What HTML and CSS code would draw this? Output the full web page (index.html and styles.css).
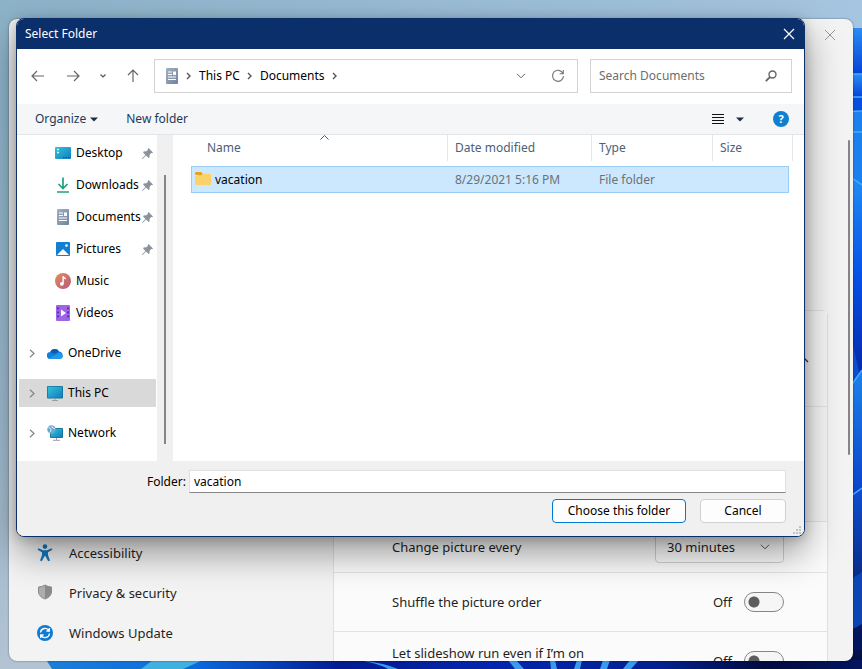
FILE: index.html
```html
<!DOCTYPE html>
<html lang="en">
<head>
<meta charset="utf-8">
<title>Select Folder</title>
<link rel="stylesheet" href="styles.css">
</head>
<body>
<svg class="wallpaper" viewBox="0 0 862 669" preserveAspectRatio="none" aria-hidden="true">
  <defs>
    <linearGradient id="sky" x1="0" y1="0" x2="1" y2="0"><stop offset="0" stop-color="#8db3c9"/><stop offset="1" stop-color="#a6c5e0"/></linearGradient>
    <linearGradient id="side" x1="0" y1="0" x2="0" y2="1"><stop offset="0" stop-color="#8fb0c8" stop-opacity="0"/><stop offset="1" stop-color="#b3c3d3"/></linearGradient>
    <linearGradient id="p1" x1="0" y1="0" x2="0" y2="1"><stop offset="0" stop-color="#2a8df5"/><stop offset="1" stop-color="#0344d6"/></linearGradient>
    <linearGradient id="p2" x1="0" y1="0" x2="0" y2="1"><stop offset="0" stop-color="#2390f4"/><stop offset=".5" stop-color="#0450e8"/><stop offset="1" stop-color="#0425a0"/></linearGradient>
    <linearGradient id="p3" x1="0" y1="0" x2="0" y2="1"><stop offset="0" stop-color="#1c83ea"/><stop offset="1" stop-color="#0534c4"/></linearGradient>
    <linearGradient id="p4" x1="0" y1="0" x2="0" y2="1"><stop offset="0" stop-color="#0e4fd2"/><stop offset="1" stop-color="#020a3c"/></linearGradient>
    <linearGradient id="floor" x1="0" y1="0" x2="1" y2="0"><stop offset="0" stop-color="#1b7fd8"/><stop offset=".18" stop-color="#0a6ade"/><stop offset=".36" stop-color="#031a8e"/><stop offset=".55" stop-color="#0426ad"/><stop offset=".75" stop-color="#03208e"/><stop offset=".88" stop-color="#020b40"/><stop offset="1" stop-color="#04155f"/></linearGradient>
  </defs>
  <rect width="862" height="669" fill="url(#sky)"/>
  <rect width="60" height="669" fill="url(#side)"/>
  <path d="M840 28h22v46h-22z" fill="url(#p1)"/>
  <path d="M840 74h22v23h-22z" fill="url(#p1)"/>
  <path d="M840 97h22v15h-22z" fill="#0750df"/>
  <path d="M840 112h22v80h-22z" fill="#1c80ef"/>
  <path d="M840 170l22 15v200h-22z" fill="url(#p2)"/>
  <path d="M840 320l13 25 9 40-22 20z" fill="#0a4fd0"/>
  <path d="M862 370l-22 32v120h22z" fill="url(#p3)"/>
  <path d="M862 488l-22 14v167h22z" fill="url(#p4)"/>
  <path d="M862 572l-22 14v50l22-12z" fill="#0c46b4"/>
  <path d="M840 74h22M840 97h22M840 112l22-1M840 132h22M846 174l16 11M862 370l-14 20M862 488l-14 10" fill="none" stroke="#46adff" stroke-width="1.5"/>
  <path d="M40 650h822v-20l-8 10v13L52 669z" fill="url(#floor)"/>
  <path d="M50 660h812v9H53z" fill="url(#floor)"/>
  <path d="M153 660h50l-20 9h-42z" fill="#3fb0e0"/>
  <path d="M360 660q24 3 38 9h-10q-8-5-28-9zM508 660h8l8 9h-9zM550 660h5l2 9h-6zM577 660h5l-2 9h-6zM603 660h7l-3 9h-7zM630 660h9l-8 9h-8z" fill="#389bec"/>
</svg>

<main class="settings">
  <nav class="settings-nav" aria-label="Settings">
    <a href="#accessibility"><svg width="16" height="18" viewBox="0 0 16 18"><circle cx="8" cy="2.6" r="2.3" fill="#1779c2"/><path d="M1.500 4.200L6 6.300h4l4.500-2.100.9 1.500L11 8.200V11l2 5.600-1.800.7L8.300 12h-.6l-2.900 5.300-1.800-.7L5 11V8.200L.6 5.700z" fill="#1779c2"/></svg>Accessibility</a>
    <a href="#privacy"><svg width="16" height="18" viewBox="0 0 16 18"><path d="M8 1q3 2 6.500 2v5Q14 13 8 15z" fill="#8b8b8b"/><path d="M8 1Q5 3 1.500 3v5Q2 13 8 15z" fill="#adadad"/><path d="M8 1q3 2 6.500 2v5Q14 13 8 15 2 13 1.500 8V3Q5 3 8 1z" fill="none" stroke="#8c8c8c"/></svg>Privacy &amp; security</a>
    <a href="#update"><svg width="16" height="16" viewBox="0 0 16 16"><circle cx="8" cy="8" r="8" fill="#0f7bd3"/><path d="M3.500 7.500A4.600 4.600 0 0 1 12 5.600M12.300 3v3H9.400M12.500 8.500A4.600 4.600 0 0 1 4 10.400M3.700 13v-3h2.900" fill="none" stroke="#fff" stroke-width="1.300"/></svg>Windows Update</a>
  </nav>
  <section class="settings-page">
    <button class="window-close" aria-label="Close settings"><svg width="12" height="12" viewBox="0 0 12 12"><path d="M1 1l10 10M11 1L1 11" stroke="#999" fill="none"/></svg></button>
    <div class="card">
      <div class="row row-head"><button class="expander" aria-label="Collapse"><svg width="13" height="8" viewBox="0 0 13 8"><path d="M1 7l5.500-5.500L12 7" fill="none" stroke="#333" stroke-width="1.300"/></svg></button></div>
      <div class="row row-gallery"></div>
      <div class="row row-short"><label for="interval">Change picture every</label>
        <span class="dropdown"><select id="interval"><option>30 minutes</option></select><svg width="10" height="6" viewBox="0 0 10 6"><path d="M1 .8l4 4 4-4" fill="none" stroke="#555"/></svg></span></div>
      <div class="row"><label for="shuffle">Shuffle the picture order</label><span class="switch"><span>Off</span><input type="checkbox" id="shuffle"></span></div>
      <div class="row row-top"><label for="battery">Let slideshow run even if I’m on</label><span class="switch"><span>Off</span><input type="checkbox" id="battery"></span></div>
    </div>
  </section>
  <div class="page-scroll"></div>
</main>

<div class="dialog" role="dialog" aria-labelledby="dialog-title">
  <header class="titlebar">
    <h1 id="dialog-title">Select Folder</h1>
    <button aria-label="Close"><svg width="12" height="12" viewBox="0 0 12 12"><path d="M1 1l10 10M11 1L1 11" stroke="#fff" stroke-width="1.200" fill="none"/></svg></button>
  </header>

  <div class="location">
    <div class="history">
      <button aria-label="Back"><svg width="14" height="12" viewBox="0 0 14 12"><path d="M13 6H1M6 1L1 6l5 5" fill="none" stroke="#666" stroke-width="1.200"/></svg></button>
      <button aria-label="Forward"><svg width="14" height="12" viewBox="0 0 14 12"><path d="M1 6h12M8 1l5 5-5 5" fill="none" stroke="#666" stroke-width="1.200"/></svg></button>
      <button class="recent" aria-label="Recent locations"><svg width="8" height="6" viewBox="0 0 8 6"><path d="M1.500 1.500L4 4l2.500-2.500" fill="none" stroke="#555" stroke-width="1.200"/></svg></button>
      <button aria-label="Up"><svg width="12" height="14" viewBox="0 0 12 14"><path d="M6 13V1M1 6l5-5 5 5" fill="none" stroke="#666" stroke-width="1.200"/></svg></button>
    </div>
    <div class="address">
      <svg width="12" height="16" viewBox="0 0 12 16"><use href="#doc"/></svg>
      <svg class="crumb-arrow" width="5" height="8" viewBox="0 0 5 8"><path d="M1 1l3 3-3 3" fill="none" stroke="#555" stroke-width="1.400"/></svg>
      <a href="#pc">This PC</a>
      <svg class="crumb-arrow" width="5" height="8" viewBox="0 0 5 8"><path d="M1 1l3 3-3 3" fill="none" stroke="#555" stroke-width="1.400"/></svg>
      <a href="#documents">Documents</a>
      <svg class="crumb-arrow" width="5" height="8" viewBox="0 0 5 8"><path d="M1 1l3 3-3 3" fill="none" stroke="#555" stroke-width="1.400"/></svg>
      <button class="address-drop" aria-label="Previous locations"><svg width="10" height="6" viewBox="0 0 10 6"><path d="M1 .8l4 4 4-4" fill="none" stroke="#666"/></svg></button>
      <button aria-label="Refresh"><svg width="14" height="14" viewBox="0 0 14 14"><path d="M12 4.500A5.500 5.500 0 1 0 12.500 7M12.300 1v3.700H8.600" fill="none" stroke="#777" stroke-width="1.100"/></svg></button>
    </div>
    <div class="search">
      <input type="text" placeholder="Search Documents" aria-label="Search Documents">
      <svg width="12" height="12" viewBox="0 0 12 12"><circle cx="7.500" cy="4.500" r="3.500" fill="none" stroke="#666" stroke-width="1.400"/><path d="M5 7L.8 11.200" stroke="#666" stroke-width="1.800"/></svg>
    </div>
  </div>

  <div class="toolbar">
    <button>Organize<svg width="8" height="5" viewBox="0 0 8 5"><path d="M0 .5h8L4 4.500z" fill="#1e2f45"/></svg></button>
    <button>New folder</button>
    <button class="view" aria-label="Change view"><svg width="12" height="10" viewBox="0 0 12 10"><path d="M0 .5h12M0 3.500h12M0 6.500h12M0 9.500h12" stroke="#111"/></svg></button>
    <button class="view-more" aria-label="More view options"><svg width="8" height="5" viewBox="0 0 8 5"><path d="M0 .5h8L4 4.500z" fill="#1e2f45"/></svg></button>
    <button class="help" aria-label="Help">?</button>
  </div>

  <div class="browser">
    <nav class="tree" aria-label="Folders">
      <ul class="quick">
        <li><a href="#desktop"><svg width="16" height="12" viewBox="0 0 16 12"><rect width="16" height="12" rx="1" fill="url(#teal)"/><path d="M2 2.500h2M2 5.500h2" stroke="#d9fbff" stroke-width="1.300"/><path d="M8 10.500h7" stroke="#0a5b9c" stroke-dasharray="1.500 1"/></svg>Desktop</a><svg class="pin" width="11" height="11" viewBox="0 0 11 11"><use href="#pin"/></svg></li>
        <li><a href="#downloads"><svg width="16" height="16" viewBox="0 0 16 16"><path d="M8 .5v11M3.500 7L8 11.500 12.500 7" fill="none" stroke="#1fa083" stroke-width="1.700"/><path d="M2 15h12" stroke="#1fa083" stroke-width="1.700"/></svg>Downloads</a><svg class="pin" width="11" height="11" viewBox="0 0 11 11"><use href="#pin"/></svg></li>
        <li><a href="#documents"><svg width="16" height="16" viewBox="-2 0 16 16"><use href="#doc"/></svg>Documents</a><svg class="pin" width="11" height="11" viewBox="0 0 11 11"><use href="#pin"/></svg></li>
        <li><a href="#pictures"><svg width="16" height="14" viewBox="0 0 16 14"><rect x="1" width="14" height="14" rx="1" fill="#1180d2"/><path d="M2 13l6-6 6 6z" fill="#fff"/><circle cx="11.500" cy="3.500" r="1.300" fill="#fff"/></svg>Pictures</a><svg class="pin" width="11" height="11" viewBox="0 0 11 11"><use href="#pin"/></svg></li>
        <li><a href="#music"><svg width="16" height="16" viewBox="0 0 16 16"><circle cx="8" cy="8" r="8" fill="url(#music-fill)"/><circle cx="6.800" cy="10.800" r="1.900" fill="#fff"/><path d="M8.100 10.800V3.200q.5 2 2.700 2.500" fill="none" stroke="#fff" stroke-width="1.400"/></svg>Music</a></li>
        <li><a href="#videos"><svg width="16" height="16" viewBox="0 0 16 16"><rect x="1" width="14" height="16" rx="1" fill="#9f63e6"/><path d="M3 2.500v12M13 2.500v12" stroke="#4b2198" stroke-width="1.600" stroke-dasharray="1.800 2.200"/><path d="M6 4.500v7L11 8z" fill="#fff"/></svg>Videos</a></li>
      </ul>
      <ul class="roots">
        <li><svg class="twist" width="6" height="9" viewBox="0 0 6 9"><use href="#twist"/></svg><a href="#onedrive"><svg width="16" height="11" viewBox="0 0 16 11"><path d="M3.500 11a3.500 3.500 0 0 1-.3-7A5 5 0 0 1 12 3.500a3.800 3.800 0 0 1 .5 7.500z" fill="#1180dc"/><path d="M3.200 4A5 5 0 0 1 12 3.500L7.500 6z" fill="#0a5bb4"/><path d="M2 10.500l10-5.400q3.800.4 4 3-.5 2.800-3.500 2.900h-9z" fill="#2698ea"/></svg>OneDrive</a></li>
        <li class="current"><svg class="twist" width="6" height="9" viewBox="0 0 6 9"><use href="#twist"/></svg><a href="#pc"><svg width="16" height="15" viewBox="0 0 16 15"><rect width="16" height="12.500" rx="1" fill="#126c93"/><rect x=".7" y=".7" width="14.600" height="11" fill="url(#teal)"/><path d="M8 12.500v2M5 14.500h6" stroke="#9a9ba5"/></svg>This PC</a></li>
        <li><svg class="twist" width="6" height="9" viewBox="0 0 6 9"><use href="#twist"/></svg><a href="#network"><svg width="16" height="16" viewBox="0 0 16 16"><rect x="3" y="3" width="13" height="10" rx="1" fill="#126c93"/><rect x="3.700" y="3.700" width="11.600" height="8.600" fill="url(#teal)"/><path d="M9.500 13v2M6 15.300h7" stroke="#a19aab"/><circle cx="4.500" cy="4.500" r="4.200" fill="#6aa9cf"/><path d="M1.500 2.500q2 .2 2.500 2T2.500 7.500M5 .8q-.5 2 1 2.200t2 1" stroke="#e1f0f8" fill="none"/></svg>Network</a></li>
      </ul>
    </nav>
    <div class="tree-scroll"><div class="thumb"></div></div>
    <div class="files">
      <table>
        <colgroup><col><col class="col-date"><col class="col-type"><col class="col-size"></colgroup>
        <thead><tr>
          <th class="name">Name<svg class="sort" width="9" height="5" viewBox="0 0 9 5"><path d="M.5 4.500l4-4 4 4" fill="none" stroke="#555"/></svg></th>
          <th>Date modified</th><th>Type</th><th>Size</th>
        </tr></thead>
        <tbody><tr>
          <td class="name"><svg width="16" height="14" viewBox="0 0 16 14"><path d="M0 2.500V1q0-1 1-1h5l2 2-2 2z" fill="#e8a317"/><path d="M0 3.500h6l2-1.800h7q1 0 1 1V12q0 1-1 1H1q-1 0-1-1z" fill="#fcd268"/></svg>vacation</td>
          <td>8/29/2021 5:16 PM</td><td>File folder</td><td></td>
        </tr></tbody>
      </table>
    </div>
  </div>

  <form class="footer">
    <div class="field"><label for="folder">Folder:</label><input type="text" id="folder" value="vacation"></div>
    <div class="actions"><button type="button" class="primary">Choose this folder</button><button type="button">Cancel</button></div>
    <svg class="grip" width="8" height="8" viewBox="0 0 8 8"><path d="M6 0h2v2H6zM6 3h2v2H6zM3 3h2v2H3zM6 6h2v2H6zM3 6h2v2H3zM0 6h2v2H0z" fill="#c2c2c2"/></svg>
  </form>
</div>

<svg class="defs" width="0" height="0" aria-hidden="true"><defs>
  <linearGradient id="teal" x1="0" y1="0" x2="1" y2="1"><stop offset="0" stop-color="#31c5d8"/><stop offset="1" stop-color="#127bc0"/></linearGradient>
  <linearGradient id="music-fill" x1="0" y1="0" x2="1" y2="1"><stop offset="0" stop-color="#e88a5c"/><stop offset="1" stop-color="#b4587c"/></linearGradient>
  <linearGradient id="steel" x1="0" y1="0" x2="1" y2="1"><stop offset="0" stop-color="#a2b1c2"/><stop offset="1" stop-color="#71849b"/></linearGradient>
  <g id="doc"><rect width="12" height="16" rx="1" fill="url(#steel)"/><path d="M2 4h4M2 6.500h4M2 9h8M2 11.500h8" stroke="#fff" stroke-width="1.100"/><path d="M7 3.500h3v3.500H7z" fill="#fff"/></g>
  <path id="pin" d="M6.500 0L11 4.500l-1 .8-.8-.2L7.500 7l.2 2-1 1L4 7.600.5 11 0 10.500 3.400 7 1 4.300l1-1 2 .2L6 1.800l-.3-1z" fill="#8b9299"/>
  <path id="twist" d="M1 .8l4 3.700-4 3.700" fill="none" stroke="#888" stroke-width="1.300"/>
</defs></svg>
</body>
</html>
```
FILE: styles.css
```css
* { box-sizing: border-box; }

body {
  margin: 0;
  height: 100vh;
  padding: 19px 9px 8px;
  position: relative;
  overflow: hidden;
  font-family: "Noto Sans", "Open Sans", sans-serif;
  font-size: 12px;
  line-height: 16px;
  color: #000;
}

button, input, select { font: inherit; color: inherit; margin: 0; }
button { display: flex; align-items: center; justify-content: center; padding: 0; border: 0; background: none; }
a { color: inherit; text-decoration: none; }
ul { list-style: none; margin: 0; padding: 0; }
svg { flex: none; display: block; }
.defs { position: absolute; }

.wallpaper { position: absolute; inset: 0; width: 100%; height: 100%; }

/* Settings window */
.settings {
  position: relative;
  display: flex;
  height: 100%;
  overflow: hidden;
  border-radius: 8px;
  background: #f3f3f3;
  box-shadow: 0 0 2px rgba(0, 0, 0, .5);
  font-size: 13px;
  line-height: 18px;
  color: #1f1f1f;
}
.settings-nav {
  flex: 0 0 324px;
  display: flex;
  flex-direction: column;
  justify-content: flex-end;
  padding: 0 0 8px 28px;
}
.settings-nav a { display: flex; align-items: center; gap: 16px; height: 40px; }
.settings-page { flex: 1; display: flex; flex-direction: column; }
.window-close { flex: none; align-self: flex-end; width: 32px; height: 32px; margin-right: -18px; }
.card {
  margin-top: 259px;
  border: 1px solid #e0e0e0;
  border-radius: 6px;
  background: #fbfbfb;
}
.row {
  display: flex;
  flex: none;
  align-items: center;
  justify-content: space-between;
  height: 59px;
  padding: 0 43px 0 58px;
  border-bottom: 1px solid #e3e3e3;
}
.row-head { height: 96px; justify-content: flex-end; padding-right: 18px; background: #f6f6f6; }
.row-gallery { height: 115px; background: #f6f6f6; }
.row-short { height: 51px; }
.row-top label { align-self: flex-start; padding-top: 12px; }
.dropdown { display: grid; align-items: center; width: 129px; height: 31px; }
.dropdown > * { grid-area: 1 / 1; }
.dropdown select {
  appearance: none;
  width: 100%;
  height: 100%;
  padding: 0 11px;
  border: 1px solid #d0d0d0;
  border-radius: 4px;
  background: #fdfdfd;
}
.dropdown svg { justify-self: end; margin-right: 14px; }
.switch { display: flex; align-items: center; gap: 12px; }
.switch input {
  appearance: none;
  width: 40px;
  height: 20px;
  border: 1px solid #868686;
  border-radius: 10px;
  background: radial-gradient(circle at 9px 9px, #5d5d5d 5px, transparent 6px) #f6f6f6;
}
.page-scroll { flex: 0 0 25px; }
.page-scroll::before {
  content: "";
  display: block;
  width: 2px;
  height: 315px;
  margin: 121px 3px 0 auto;
  border-radius: 1px;
  background: #858585;
}

/* Folder dialog */
.dialog {
  position: absolute;
  inset: 18px 57px 132px 16px;
  display: flex;
  flex-direction: column;
  overflow: hidden;
  border: 1px solid #0b2f6b;
  border-radius: 8px;
  background: #fff;
  box-shadow: 0 16px 36px rgba(0, 0, 0, .4), 0 2px 12px rgba(0, 0, 0, .2);
}
.titlebar {
  display: flex;
  flex: none;
  align-items: center;
  justify-content: space-between;
  height: 30px;
  padding: 0 9px 0 8px;
  background: #0a2f6a;
  color: #fff;
}
.titlebar h1 { margin: 0; font-size: 12px; font-weight: 400; }

.location { display: flex; flex: none; height: 55px; padding: 10px 12px 11px 3px; }
.history { display: flex; flex: none; width: 134px; }
.history button { width: 35px; }
.history .recent { width: 25px; }
.address, .search { display: flex; align-items: center; border: 1px solid #d3d3d3; background: #fff; }
.address { flex: 1; padding: 0 11px; }
.address a { margin-right: 7px; }
.address .crumb-arrow { margin-right: 8px; }
.address > svg:first-child { margin-right: 8px; }
.address button { width: 16px; height: 16px; }
.address .address-drop { margin: 0 21px 0 auto; }
.search { flex: none; width: 202px; margin-left: 12px; padding: 0 14px 0 8px; }
.search input { flex: 1; min-width: 0; padding: 0; border: 0; outline: 0; background: none; }
.search input::placeholder { color: #6d6d6d; opacity: 1; }

.toolbar {
  display: flex;
  flex: none;
  align-items: center;
  height: 31px;
  padding: 0 15px 0 18px;
  border-bottom: 1px solid #e3e6e9;
  background: #f4f6f8;
  color: #1e395b;
}
.toolbar button { gap: 4px; margin-right: 28px; }
.toolbar .view { margin: 0 12px 0 auto; }
.toolbar .view-more { margin-right: 29px; }
.toolbar .help {
  width: 16px;
  height: 16px;
  margin: 0;
  border-radius: 50%;
  background: #0f80cf;
  color: #fff;
  font-size: 11px;
  font-weight: 700;
}

.browser { display: flex; flex: 1; min-height: 0; }
.tree { flex: 0 0 140px; padding: 2px 1px 0 2px; overflow: hidden; }
.tree li { display: flex; align-items: center; }
.tree a { display: flex; align-items: center; }
.quick li { height: 32px; justify-content: space-between; padding: 0 3px 0 36px; }
.quick a { gap: 5px; }
.roots { margin-top: 10px; display: grid; gap: 12px; }
.roots li { height: 28px; padding-left: 10px; }
.roots a { gap: 5px; margin-left: 12px; }
.current { background: #d9d9d9; }
.tree-scroll { flex: 0 0 16px; padding: 40px 7px 17px; background: #f0f0f0; }
.thumb { height: 100%; background: #858585; }
.files { flex: 1; padding: 0 15px 0 18px; }
table { width: 100%; table-layout: fixed; border-collapse: separate; border-spacing: 0; }
.col-date { width: 144px; }
.col-type { width: 121px; }
.col-size { width: 76px; }
th { position: relative; height: 31px; padding: 0 7px 5px; text-align: left; font-weight: 400; color: #4c607a; }
th.name { padding-left: 16px; }
th::after {
  content: "";
  position: absolute;
  top: 0;
  right: 0;
  width: 1px;
  height: 26px;
  background: #e3e6ea;
}
th:last-child::after { right: -4px; }
.sort { position: absolute; top: 0; left: 129px; }
td {
  height: 27px;
  padding: 0 7px;
  border: 1px solid #99cdf5;
  border-width: 1px 0;
  background: #cce8ff;
  color: #6b7178;
}
td.name { padding-left: 3px; border-left-width: 1px; color: #000; }
td.name svg { display: inline-block; margin-right: 4px; vertical-align: -2px; }
td:last-child { border-right-width: 1px; }

.footer {
  position: relative;
  flex: none;
  height: 75px;
  padding: 9px 18px 0 130px;
  background: #f0f0f0;
}
.field { display: flex; align-items: center; gap: 3px; }
.field input {
  flex: 1;
  height: 23px;
  padding: 0 4px;
  border: 1px solid #e0e0e0;
  border-bottom-color: #868686;
  background: #fff;
}
.actions { display: flex; justify-content: flex-end; gap: 14px; margin-top: 6px; }
.actions button {
  width: 86px;
  height: 24px;
  border: 1px solid #d0d0d0;
  border-radius: 4px;
  background: #fdfdfd;
}
.actions .primary { width: 134px; border-color: #0078d4; }
.grip { position: absolute; right: 3px; bottom: 2px; }
```
